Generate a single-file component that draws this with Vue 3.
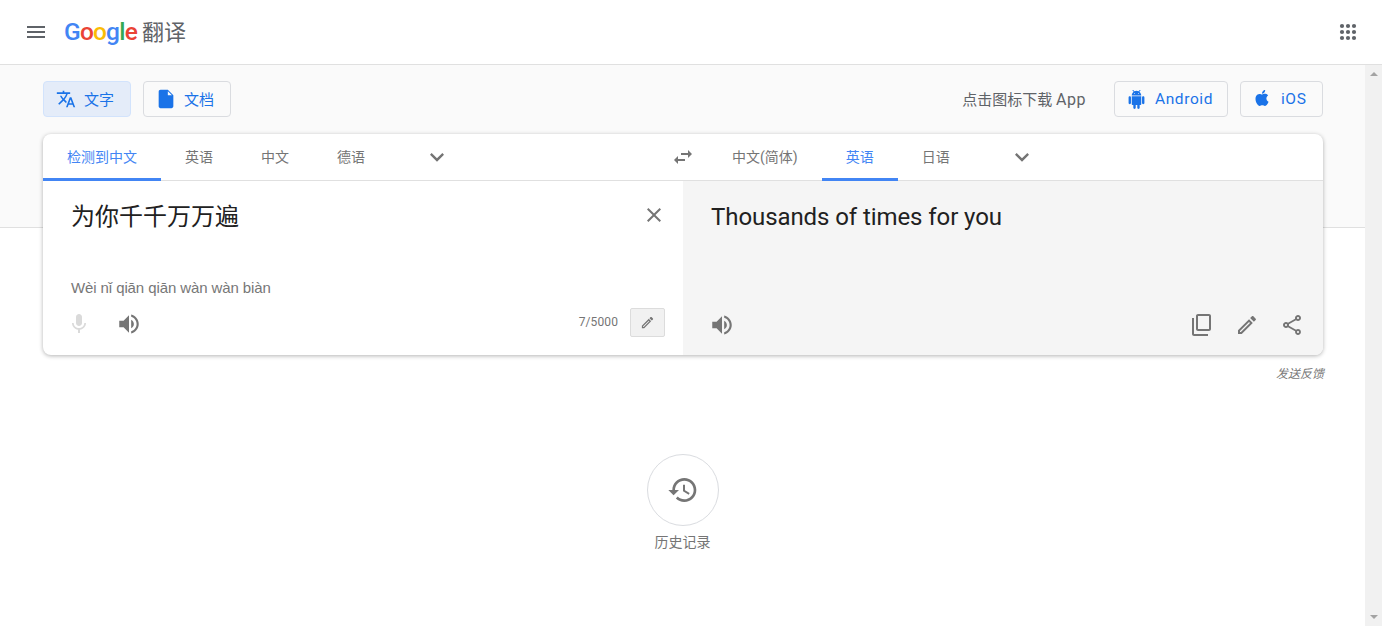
<script setup>
const paths = {
  menu: 'M3 18h18v-2H3v2zm0-5h18v-2H3v2zm0-7v2h18V6H3z',
  translate: 'M12.87 15.07l-2.54-2.51.03-.03c1.74-1.94 2.98-4.17 3.71-6.53H17V4h-7V2H8v2H1v1.99h11.17C11.5 7.92 10.44 9.75 9 11.35 8.07 10.32 7.3 9.19 6.69 8h-2c.73 1.63 1.73 3.17 2.98 4.56l-5.09 5.02L4 19l5-5 3.11 3.11.76-2.04zM18.5 10h-2L12 22h2l1.12-3h4.75L21 22h2l-4.5-12zm-2.62 7l1.62-4.33L19.12 17h-3.24z',
  file: 'M6 2c-1.1 0-1.99.9-1.99 2L4 20c0 1.1.89 2 1.99 2H18c1.1 0 2-.9 2-2V8l-6-6H6zm8 6V3.5L18.5 8H14z',
  android: 'M6 18c0 .55.45 1 1 1h1v3.5c0 .83.67 1.5 1.5 1.5s1.5-.67 1.5-1.5V19h2v3.5c0 .83.67 1.5 1.5 1.5s1.5-.67 1.5-1.5V19h1c.55 0 1-.45 1-1V8H6v10zM3.5 8C2.67 8 2 8.67 2 9.5v7c0 .83.67 1.5 1.5 1.5S5 17.33 5 16.5v-7C5 8.67 4.33 8 3.5 8zm17 0c-.83 0-1.5.67-1.5 1.5v7c0 .83.67 1.5 1.5 1.5s1.5-.67 1.5-1.5v-7c0-.83-.67-1.5-1.5-1.5zm-4.97-5.84l1.3-1.3c.2-.2.2-.51 0-.71-.2-.2-.51-.2-.71 0l-1.48 1.48C13.85 1.23 12.95 1 12 1c-.96 0-1.86.23-2.66.63L7.85.15c-.2-.2-.51-.2-.71 0-.2.2-.2.51 0 .71l1.31 1.31C6.97 3.26 6 5.01 6 7h12c0-1.99-.97-3.75-2.47-4.84zM10 5H9V4h1v1zm5 0h-1V4h1v1z',
  apple: 'M12.152 6.896c-.948 0-2.415-1.078-3.96-1.04-2.04.027-3.91 1.183-4.961 3.014-2.117 3.675-.546 9.103 1.519 12.09 1.013 1.454 2.208 3.09 3.792 3.039 1.52-.065 2.09-.987 3.935-.987 1.831 0 2.35.987 3.96.948 1.637-.026 2.676-1.48 3.676-2.948 1.156-1.688 1.636-3.325 1.662-3.415-.039-.013-3.182-1.221-3.22-4.857-.026-3.04 2.48-4.494 2.597-4.559-1.429-2.09-3.623-2.324-4.39-2.376-2-.156-3.675 1.09-4.61 1.09zM15.53 3.83c.843-1.012 1.4-2.427 1.245-3.83-1.207.052-2.662.805-3.532 1.818-.78.896-1.454 2.338-1.273 3.714 1.338.104 2.715-.688 3.559-1.701',
  chevron: 'M16.59 8.59L12 13.17 7.41 8.59 6 10l6 6 6-6z',
  swap: 'M6.99 11L3 15l3.99 4v-3H14v-2H6.99v-3zM21 9l-3.99-4v3H10v2h7.01v3L21 9z',
  close: 'M19 6.41L17.59 5 12 10.59 6.41 5 5 6.41 10.59 12 5 17.59 6.41 19 12 13.41 17.59 19 19 17.59 13.41 12z',
  mic: 'M12 14c1.66 0 3-1.34 3-3V5c0-1.66-1.34-3-3-3S9 3.34 9 5v6c0 1.66 1.34 3 3 3zm5.3-3c0 3-2.54 5.1-5.3 5.1S6.7 14 6.7 11H5c0 3.42 2.72 6.23 6 6.72V21h2v-3.28c3.28-.48 6-3.3 6-6.72h-1.7z',
  volume: 'M3 9v6h4l5 5V4L7 9H3zm13.5 3c0-1.77-1.02-3.29-2.5-4.03v8.05c1.48-.73 2.5-2.25 2.5-4.02zM14 3.23v2.06c2.89.86 5 3.54 5 6.71s-2.11 5.85-5 6.71v2.06c4.01-.91 7-4.49 7-8.77s-2.99-7.86-7-8.77z',
  copy: 'M4 5H2v16c0 1.1.9 2 2 2h14v-2H4V5zm15-4H8c-1.1 0-2 .9-2 2v13c0 1.1.9 2 2 2h11c1.1 0 2-.9 2-2V3c0-1.1-.9-2-2-2zm0 15H8V3h11v13z',
  pencil: 'M14.06 9.02l.92.92L5.92 19H5v-.92l9.06-9.06M17.66 3c-.25 0-.51.1-.7.29l-1.83 1.83 3.75 3.75 1.83-1.83c.39-.39.39-1.02 0-1.41l-2.34-2.34c-.2-.2-.45-.29-.71-.29zm-3.6 3.19L3 17.25V21h3.75L17.81 9.94l-3.75-3.75z',
  share: 'M18 16.08c-.76 0-1.44.3-1.96.77L8.91 12.7c.05-.23.09-.46.09-.7s-.04-.47-.09-.7l7.05-4.11c.54.5 1.25.81 2.04.81 1.66 0 3-1.34 3-3s-1.34-3-3-3-3 1.34-3 3c0 .24.04.47.09.7L8.04 9.81C7.5 9.31 6.79 9 6 9c-1.66 0-3 1.34-3 3s1.34 3 3 3c.79 0 1.5-.31 2.04-.81l7.12 4.16c-.05.21-.08.43-.08.65 0 1.61 1.31 2.92 2.92 2.92s2.92-1.31 2.92-2.92c0-1.61-1.31-2.92-2.92-2.92zM18 4c.55 0 1 .45 1 1s-.45 1-1 1-1-.45-1-1 .45-1 1-1zM6 13c-.55 0-1-.45-1-1s.45-1 1-1 1 .45 1 1-.45 1-1 1zm12 7.02c-.55 0-1-.45-1-1s.45-1 1-1 1 .45 1 1-.45 1-1 1z',
  history: 'M13 3c-4.97 0-9 4.03-9 9H1l3.89 3.89.07.14L9 12H6c0-3.87 3.13-7 7-7s7 3.13 7 7-3.13 7-7 7c-1.93 0-3.68-.79-4.94-2.06l-1.42 1.42C8.27 19.99 10.51 21 13 21c4.97 0 9-4.03 9-9s-4.03-9-9-9zm-1 5v5l4.28 2.54.72-1.21-3.5-2.08V8H12z'
}
const logo = [
  { c: 'G', color: '#4285f4' },
  { c: 'o', color: '#ea4335' },
  { c: 'o', color: '#fbbc05' },
  { c: 'g', color: '#4285f4' },
  { c: 'l', color: '#34a853' },
  { c: 'e', color: '#ea4335' }
]
const sourceTabs = [
  { label: '检测到中文', active: true },
  { label: '英语' },
  { label: '中文' },
  { label: '德语' }
]
const targetTabs = [
  { label: '中文(简体)' },
  { label: '英语', active: true },
  { label: '日语' }
]
const dots = []
for (const y of [6, 12, 18]) for (const x of [6, 12, 18]) dots.push({ x, y })
</script>

<template>
  <div class="page">
    <header class="top">
      <svg class="ic menu" viewBox="0 0 24 24"><path :d="paths.menu" /></svg>
      <div class="logo">
        <span v-for="(l, i) in logo" :key="i" :style="{ color: l.color }">{{ l.c }}</span>
      </div>
      <span class="product">翻译</span>
      <svg class="apps" viewBox="0 0 24 24"><circle v-for="(d, i) in dots" :key="i" :cx="d.x" :cy="d.y" r="2.1" /></svg>
    </header>

    <div class="body">
      <main class="main">
        <section class="band">
          <div class="toolbar">
            <button class="tb on"><svg class="ic blue i20" viewBox="0 0 24 24"><path :d="paths.translate" /></svg><span class="cjk">文字</span></button>
            <button class="tb doc"><svg class="ic blue i22" viewBox="0 0 24 24"><path :d="paths.file" /></svg><span class="cjk">文档</span></button>
            <span class="dl cjk">点击图标下载 <span class="app">App</span></span>
            <button class="tb store android"><svg class="ic blue i19" viewBox="0 0 24 24"><path :d="paths.android" /></svg><span>Android</span></button>
            <button class="tb store ios"><svg class="ic blue i16 apple" viewBox="0 0 24 24"><path :d="paths.apple" /></svg><span>iOS</span></button>
          </div>

          <div class="card">
            <div class="tabs">
              <div class="tab-group src-tabs">
                <div v-for="t in sourceTabs" :key="t.label" class="tab" :class="{ active: t.active }">{{ t.label }}</div>
                <div class="more"><svg class="ic grey i28" viewBox="0 0 24 24"><path :d="paths.chevron" /></svg></div>
              </div>
              <svg class="ic grey i24 swap" viewBox="0 0 24 24"><path :d="paths.swap" /></svg>
              <div class="tab-group">
                <div v-for="t in targetTabs" :key="t.label" class="tab" :class="{ active: t.active }">{{ t.label }}</div>
                <div class="more"><svg class="ic grey i28" viewBox="0 0 24 24"><path :d="paths.chevron" /></svg></div>
              </div>
            </div>
            <div class="panels">
              <div class="panel src">
                <div class="src-row">
                  <div class="big src-text">为你千千万万遍</div>
                  <svg class="ic grey i24" viewBox="0 0 24 24"><path :d="paths.close" /></svg>
                </div>
                <div class="roman">Wèi nǐ qiān qiān wàn wàn biàn</div>
                <div class="foot">
                  <svg class="ic mic i24" viewBox="0 0 24 24"><path :d="paths.mic" /></svg>
                  <svg class="ic grey i26" viewBox="0 0 24 24"><path :d="paths.volume" /></svg>
                  <span class="count">7/5000</span>
                  <button class="edit"><svg class="ic grey i15" viewBox="0 0 24 24"><path :d="paths.pencil" /></svg></button>
                </div>
              </div>
              <div class="panel tgt">
                <div class="big">Thousands of times for you</div>
                <div class="foot tgt-foot">
                  <svg class="ic grey i26 tgt-vol" viewBox="0 0 24 24"><path :d="paths.volume" /></svg>
                  <svg class="ic grey i24 push" viewBox="0 0 24 24"><path :d="paths.copy" /></svg>
                  <svg class="ic grey i24" viewBox="0 0 24 24"><path :d="paths.pencil" /></svg>
                  <svg class="ic grey i24" viewBox="0 0 24 24"><path :d="paths.share" /></svg>
                </div>
              </div>
            </div>
          </div>
        </section>

        <div class="feedback">发送反馈</div>

        <div class="history">
          <div class="hist-circle"><svg class="ic grey i32" viewBox="0 0 24 24"><path :d="paths.history" /></svg></div>
          <div class="hist-label">历史记录</div>
        </div>
      </main>
      <aside class="scroll">
        <i class="tri up"></i>
        <i class="tri down"></i>
      </aside>
    </div>
  </div>
</template>

<style>
html, body { margin: 0; overflow: hidden; background: #fff; }
</style>

<style scoped>
.page {
  width: 1382px;
  height: 626px;
  display: flex;
  flex-direction: column;
  font-family: Roboto, "Noto Sans CJK SC", sans-serif;
  color: #5f6368;
  overflow: hidden;
}
.ic { display: block; flex: none; fill: #5f6368; }
.i15 { width: 15px; height: 15px; }
.i16 { width: 16px; height: 16px; }
.i19 { width: 19px; height: 19px; }
.i20 { width: 20px; height: 20px; }
.i22 { width: 22px; height: 22px; }
.i24 { width: 24px; height: 24px; }
.i26 { width: 26px; height: 26px; }
.i28 { width: 28px; height: 28px; }
.i32 { width: 32px; height: 32px; }
.blue { fill: #1a73e8; }
.grey { fill: #757575; }
.mic { fill: #dadada; }

.top {
  height: 64px;
  flex: none;
  display: flex;
  align-items: center;
  padding: 0 22px 0 24px;
  border-bottom: 1px solid #e0e0e0;
}
.menu { width: 24px; height: 24px; }
.logo {
  margin-left: 16px;
  font-size: 24.5px;
  font-weight: 500;
  letter-spacing: -0.8px;
  line-height: 32px;
  width: 78px;
}
.product { font-size: 22px; line-height: 32px; color: #5f6368; margin-top: 2px; }
.apps { width: 24px; height: 24px; margin-left: auto; fill: #5f6368; }

.body { flex: 1; display: flex; min-height: 0; }
.main { flex: 1; min-width: 0; display: flex; flex-direction: column; }

.band {
  background: #fafafa;
  border-bottom: 1px solid #e0e0e0;
  padding: 16px 42px 0 43px;
}
.toolbar { display: flex; align-items: center; height: 36px; }
.tb {
  box-sizing: border-box;
  height: 36px;
  display: flex;
  align-items: center;
  font-family: inherit;
  font-size: 15px;
  color: #1a73e8;
  background: transparent;
  border: 1px solid #dadce0;
  border-radius: 4px;
  padding: 0;
}
.cjk { margin-bottom: 2px; }
.on {
  width: 88px;
  background: #e4ecf9;
  border-color: #d2e3fc;
  padding-left: 12px;
  gap: 8px;
}
.doc {
  width: 88px;
  margin-left: 12px;
  padding-left: 11px;
  gap: 7px;
}
.dl {
  margin-left: auto;
  font-size: 15px;
  color: #5f6368;
}
.app { font-size: 16px; letter-spacing: 0.5px; }
.store { font-weight: 400; font-size: 15.5px; letter-spacing: 0.6px; }
.android { width: 114px; margin-left: 28px; padding-left: 12px; gap: 9px; }
.ios { width: 83px; margin-left: 12px; padding-left: 13px; gap: 11px; }
.apple { margin-bottom: 2px; }

.card {
  margin-top: 17px;
  margin-bottom: -128px;
  height: 221px;
  display: flex;
  flex-direction: column;
  background: #fff;
  border-radius: 8px;
  box-shadow: 0 1px 4px rgba(0, 0, 0, 0.3);
  overflow: hidden;
  position: relative;
}
.tabs {
  height: 46px;
  flex: none;
  display: flex;
  align-items: stretch;
  border-bottom: 1px solid #e0e0e0;
}
.tab-group { display: flex; align-items: stretch; }
.src-tabs { width: 628px; }
.tab {
  padding: 0 24px;
  font-size: 14px;
  line-height: 46px;
  color: #757575;
  box-sizing: border-box;
  border-bottom: 3px solid transparent;
  margin-bottom: -1px;
  height: 47px;
}
.tab.active { color: #4285f4; border-bottom-color: #4285f4; }
.more { width: 96px; display: flex; align-items: center; justify-content: center; }
.swap { align-self: center; margin-right: 13px; }

.panels { flex: 1; display: flex; min-height: 0; }
.panel {
  width: 640px;
  box-sizing: border-box;
  display: flex;
  flex-direction: column;
  padding: 20px 17px 7px 28px;
}
.tgt { background: #f5f5f5; padding-right: 19px; padding-bottom: 6px; }
.big { font-size: 24px; line-height: 32px; color: #212121; letter-spacing: -0.08px; }
.src-text { flex: 1; letter-spacing: 0; }
.src-row { display: flex; align-items: flex-start; }
.src-row .ic { margin-top: 2px; }
.roman {
  margin-top: auto;
  font-family: "Liberation Sans", Arial, sans-serif;
  font-size: 15px;
  letter-spacing: -0.1px;
  line-height: 18px;
  color: #777;
}
.foot {
  height: 48px;
  margin-top: 3px;
  display: flex;
  align-items: center;
}
.foot .mic { margin-left: -4px; }
.foot .mic + .ic { margin-left: 25px; }
.count {
  margin-left: auto;
  margin-bottom: 4px;
  font-size: 12px;
  letter-spacing: 0.1px;
  color: #757575;
}
.edit {
  box-sizing: border-box;
  width: 35px;
  height: 29px;
  margin: -3px 1px 0 12px;
  padding: 0;
  display: flex;
  align-items: center;
  justify-content: center;
  background: #f1f1f1;
  border: 1px solid #dcdcdc;
  border-radius: 2px;
}
.tgt-foot { margin-top: auto; gap: 21px; }
.tgt-vol { margin-left: -2px; }
.push { margin-left: auto; }

.feedback {
  margin: 137px 41px 0 0;
  text-align: right;
  font-size: 12px;
  line-height: 18px;
  font-style: italic;
  color: #777;
}
.history {
  margin-top: 71px;
  display: flex;
  flex-direction: column;
  align-items: center;
}
.hist-circle {
  box-sizing: border-box;
  width: 72px;
  height: 72px;
  border: 1px solid #dadce0;
  border-radius: 50%;
  display: flex;
  align-items: center;
  justify-content: center;
}
.hist-label {
  margin-top: 6px;
  font-size: 14px;
  line-height: 20px;
  color: #757575;
}

.scroll {
  width: 17px;
  flex: none;
  background: #f1f1f1;
  display: flex;
  flex-direction: column;
  justify-content: space-between;
  align-items: center;
  padding: 7px 0 7px;
}
.tri {
  width: 0;
  height: 0;
  border-left: 4px solid transparent;
  border-right: 4px solid transparent;
}
.tri.up { border-bottom: 4px solid #a3a3a3; }
.tri.down { border-top: 4px solid #a3a3a3; }
</style>
